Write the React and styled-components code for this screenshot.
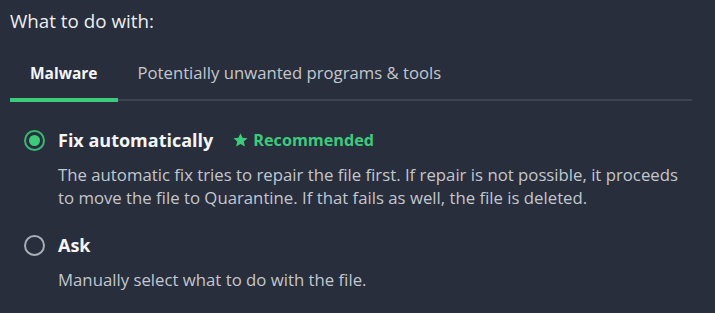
import React, {useState} from "react";
import styled, {createGlobalStyle} from "styled-components";

const GlobalStyle = createGlobalStyle`
  html, body {
    margin: 0;
    padding: 0;
    background-color: #282e3b;
  }
  body {
    font-family: "Open Sans", "Noto Sans", sans-serif;
  }
`;

const Page = styled.div`
  width: 715px;
  height: 313px;
  background-color: #282e3b;
  padding: 9px 10px 0 10px;
  box-sizing: border-box;
  display: flex;
  flex-direction: column;
`;

const Heading = styled.h2`
  margin: 0;
  font-size: 18.8px;
  font-weight: 400;
  color: #eceef2;
  line-height: 25px;
`;

const TabBar = styled.div`
  display: flex;
  margin-top: 29px;
  width: 682px;
  border-bottom: 2px solid #3d4350;
`;

const Tab = styled.button`
  background: none;
  border: none;
  cursor: pointer;
  font-family: inherit;
  font-size: ${({active}) => (active ? "15.5px" : "16.7px")};
  font-weight: ${({active}) => (active ? 700 : 400)};
  color: ${({active}) => (active ? "#f4f5f7" : "#c3c7cf")};
  padding: 0 20px 15px 20px;
  margin-bottom: -3px;
  border-bottom: 4px solid ${({active}) => (active ? "#3ccb7c" : "transparent")};
  line-height: 20px;
`;

const Options = styled.div`
  display: flex;
  flex-direction: column;
  gap: 24px;
  margin-top: 27px;
  padding-left: 14px;
`;

const Option = styled.label`
  display: grid;
  grid-template-columns: 20px 1fr;
  column-gap: 14px;
  row-gap: 11px;
  cursor: pointer;
`;

const Radio = styled.span`
  width: 21px;
  height: 21px;
  box-sizing: border-box;
  border-radius: 50%;
  border: 2px solid ${({checked}) => (checked ? "#37b871" : "#a9adb6")};
  display: flex;
  align-items: center;
  justify-content: center;
  align-self: center;

  &::after {
    content: "";
    width: 11px;
    height: 11px;
    border-radius: 50%;
    background-color: #3ccb7c;
    display: ${({checked}) => (checked ? "block" : "none")};
  }
`;

const TitleRow = styled.div`
  display: flex;
  align-items: center;
  gap: 19px;
`;

const OptionTitle = styled.span`
  font-size: 18px;
  font-weight: 700;
  color: #f4f5f7;
  line-height: 24px;
`;

const Badge = styled.span`
  display: flex;
  align-items: center;
  gap: 4px;
  font-size: 16.2px;
  font-weight: 700;
  color: #3ccb7c;
`;

const Desc = styled.p`
  grid-column: 2;
  margin: 0;
  font-size: 16.75px;
  line-height: 23px;
  color: #c3c7cf;
`;

const Star = () => (
    <svg width="17" height="16" viewBox="0 0 24 24" fill="#3ccb7c">
        <path d="M12 1.8l3.1 6.9 7.4.7-5.6 5 1.7 7.4L12 18l-6.6 3.8 1.7-7.4-5.6-5 7.4-.7z"/>
    </svg>
);

const App = () => {
    const [tab, setTab] = useState("malware");
    const [choice, setChoice] = useState("fix");

    return (
        <>
            <GlobalStyle/>
            <Page>
                <Heading>What to do with:</Heading>
                <TabBar>
                    <Tab active={tab === "malware"} onClick={() => setTab("malware")}>Malware</Tab>
                    <Tab active={tab === "pup"} onClick={() => setTab("pup")}>
                        Potentially unwanted programs &amp; tools
                    </Tab>
                </TabBar>
                <Options>
                    <Option onClick={() => setChoice("fix")}>
                        <Radio checked={choice === "fix"}/>
                        <TitleRow>
                            <OptionTitle>Fix automatically</OptionTitle>
                            <Badge><Star/>Recommended</Badge>
                        </TitleRow>
                        <Desc>
                            The automatic fix tries to repair the file first. If repair is not possible, it proceeds<br/>
                            to move the file to Quarantine. If that fails as well, the file is deleted.
                        </Desc>
                    </Option>
                    <Option onClick={() => setChoice("ask")}>
                        <Radio checked={choice === "ask"}/>
                        <TitleRow>
                            <OptionTitle>Ask</OptionTitle>
                        </TitleRow>
                        <Desc>Manually select what to do with the file.</Desc>
                    </Option>
                </Options>
            </Page>
        </>
    );
};

export default App;
